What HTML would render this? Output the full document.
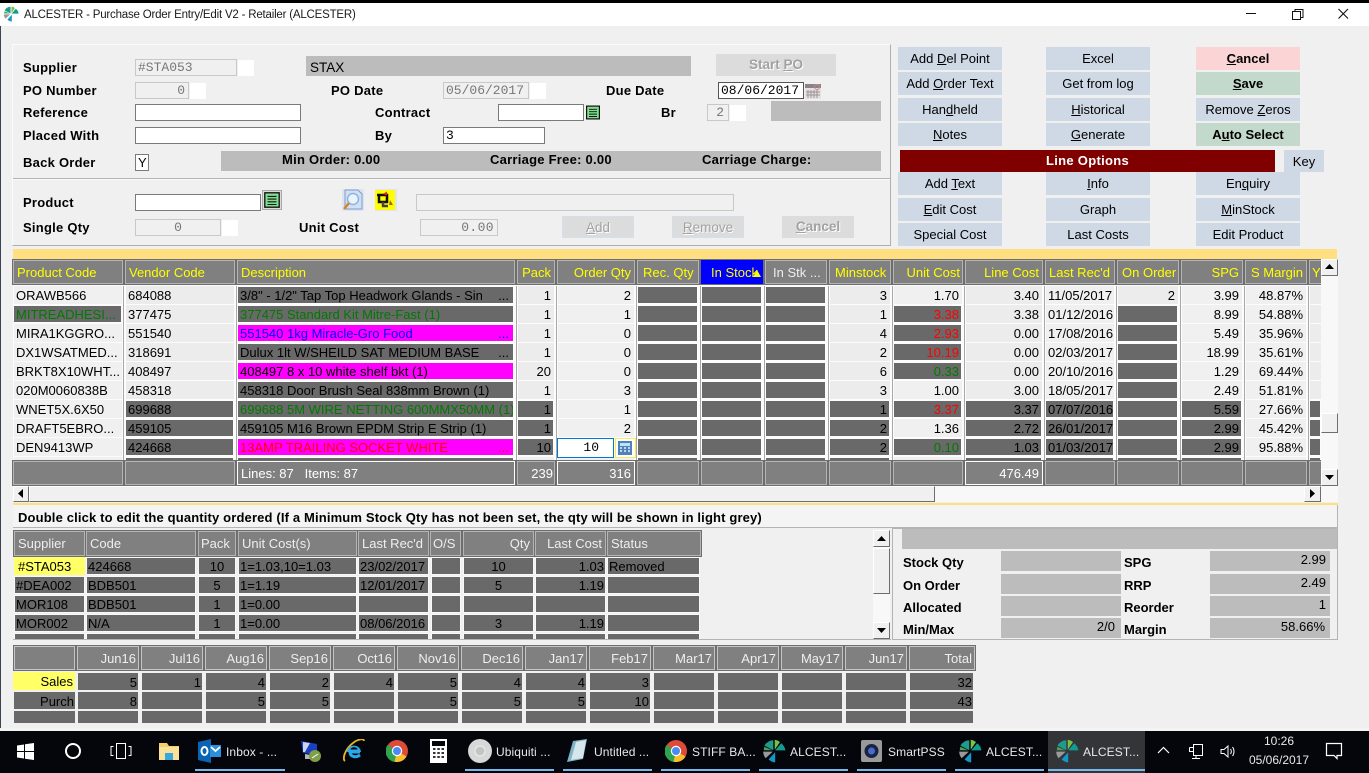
<!DOCTYPE html>
<html><head><meta charset="utf-8"><title>ALCESTER</title>
<style>
html,body{margin:0;padding:0;width:1369px;height:773px;overflow:hidden;background:#f0f0f0}
body{font:13px/18px "Liberation Sans",sans-serif;color:#000;position:relative}
div,span.a,svg.a{position:absolute;box-sizing:border-box;white-space:nowrap}
.l{font-weight:bold;letter-spacing:.25px;height:19px;padding-top:1px}
.w{background:#fff}
.i{background:#fff;border:1px solid #7a7a7a;font:13px/15px "Liberation Mono",monospace;padding-left:2px;height:17px}
.g{background:#f0f0f0;border:1px solid #c8c8c8;font:13px/15px "Liberation Mono",monospace;color:#777;height:17px;padding:0 3px}
.bar{background:#bcbcbc}
.b{background:#cfd9e6;width:104px;height:23px;text-align:center;font-size:13px;line-height:23px}
.bc1{left:898px}.bc2{left:1046px}.bc3{left:1196px}
.dis{background:#dcdcdc;height:22px;text-align:center;font-weight:bold;color:#a2a2a2;text-shadow:1px 1px 0 #fff;line-height:22px;font-size:13.5px}
.h{background:#808080;border:1px solid #b4b4b4;outline:1px solid #6e6e6e;color:#ff0;height:24px;line-height:23px;font-size:13px;padding:0 3px;top:260px;overflow:hidden}
.f{top:461px;color:#fff;border-color:#b4b4b4;background:#808080}
.fw{border-color:#fff}
.r{text-align:right}.ct{text-align:center}
.row{left:0;width:1369px;height:18px}
.row div{top:0;height:18px;background:#ececec;padding:0 3px 0 2px;line-height:20px;overflow:hidden}
.row .n{background:#f0f0f0}
.row .d,.row .m{background:#696969;background-clip:padding-box;border:1px solid transparent;border-left-width:0;padding:0 2px;line-height:18px}
.row .m{background-color:#f0f}
.e{position:absolute;right:4px;top:0}
.gr{color:#007a00}.rd{color:#f00}.bl{color:#00f}
.c1{left:14px;width:108px}.c2{left:126px;width:108px}.c3{left:238px;width:276px}.c4{left:518px;width:36px}.c5{left:558px;width:76px}.c6{left:638px;width:60px}.c7{left:702px;width:60px}.c8{left:766px;width:60px}.c9{left:830px;width:60px}.c10{left:894px;width:68px}.c11{left:966px;width:76px}.c12{left:1046px;width:68px}.c13{left:1118px;width:60px}.c14{left:1182px;width:60px}.c15{left:1246px;width:60px}.c16{left:1310px;width:11px}
.v{top:286px;height:175px;width:1px;background:#a8a8a8}
.sb{background:#f0f0f0;border:1px solid;border-color:#fff #6e6e6e #6e6e6e #fff}
.lh{top:531px;height:25px;background:#808080;border:1px solid #b4b4b4;outline:1px solid #6e6e6e;color:#eee;line-height:23px;padding:0 3px}
.lrow{left:0;width:900px;height:18px}
.lrow div{top:0;height:18px;background:#696969;background-clip:padding-box;border:1px solid #f8f8f8;line-height:18px;padding:0 1px;overflow:hidden}
.l1{left:14px;width:71px}.l2{left:86px;width:110px}.l3{left:198px;width:38px}.l4{left:238px;width:119px}.l5{left:358px;width:71px}.l6{left:431px;width:30px}.l7{left:463px;width:71px}.l8{left:535px;width:71px}.l9{left:607px;width:93px}
.p{background:#bcbcbc;height:20px;width:120px;text-align:right;padding-right:4px;line-height:18px}
.pl{font-weight:bold;height:19px;padding-top:1px}
.mh{display:flex;gap:2px;left:77px}
.mh span{display:block;box-sizing:border-box;width:62px;height:24px;background:#808080;border:1px solid #c4c4c4;outline:1px solid #6e6e6e;color:#eee;text-align:right;padding-right:2px;line-height:24px}
.mr{display:flex;gap:4px;left:78px}
.mr span{display:block;width:60px;height:17px;background:#696969;text-align:right;line-height:19px;padding-right:1px;box-sizing:border-box;overflow:hidden}
.tt{color:#e8e8e8;font-size:12px;top:743px;line-height:18px;letter-spacing:.1px}
.ul{top:769px;height:2px;background:#76b9ed}
</style></head><body>
<svg width="0" height="0" style="position:absolute"><defs>
<symbol id="logo" viewBox="0 0 20 20"><path d="M9.4 9.4V1A9 9 0 0 0 2 5.500Z" fill="#1f9a8c"/><path d="M10.600 9V.6A9 9 0 0 1 15 2.500Z" fill="#7cc04a"/><path d="M11 9.500L16 3.500A9 9 0 0 1 19.500 9.500Z" fill="#0f9d8f"/><path d="M9.500 11V19.500A9 9 0 0 1 4 17Z" fill="#1497c9" transform="translate(1.500 0)"/><path d="M9 10.500H1A9 9 0 0 0 3 16Z" fill="#9a9a9a"/><path d="M1.500 9.400A9 9 0 0 1 2 6.500L8.500 9.400Z" fill="#4aa05a"/></symbol>
<symbol id="chrome" viewBox="0 0 22 22"><circle cx="11" cy="11" r="11" fill="#dd4b39"/><path d="M11 11L20.500 16.500A11 11 0 0 1 8 21.600Z" fill="#f6c02c"/><path d="M11 11L8.500 22A11 11 0 0 1 1.500 5Z" fill="#2ea44f"/><circle cx="11" cy="11" r="5.200" fill="#fff"/><circle cx="11" cy="11" r="4" fill="#4a8af4"/></symbol>
<symbol id="list" viewBox="0 0 20 20"><rect x="2" y="2" width="16" height="16" fill="#7fe08f" stroke="#111" stroke-width="1.500"/><path d="M5 6H15M5 9H15M5 12H15M5 15H15" stroke="#111" stroke-width="1.200"/></symbol>
</defs></svg>

<!-- window chrome -->
<div style="left:0;top:0;width:1369px;height:3px;background:#000"></div>
<div style="left:0;top:3px;width:1369px;height:23px;background:#fff"></div>
<svg class="a" style="left:3px;top:6px" width="16" height="16"><use href="#logo"/></svg>
<div style="left:24px;top:7px;font-size:11.5px;line-height:17px;color:#1a1a1a;letter-spacing:-.2px">ALCESTER - Purchase Order Entry/Edit V2 - Retailer (ALCESTER)</div>
<svg class="a" style="left:1240px;top:5px" width="120" height="18" fill="none" stroke="#111"><path d="M6 8.500H16"/><path d="M52.500 6.500h8v8h-8zM55 6.500V4.500h8v8h-2"/><path d="M98.500 4L108 13.500M108 4L98.500 13.500" stroke-width="1.100"/></svg>
<div style="left:0;top:26px;width:1px;height:705px;background:#3c4454"></div>

<!-- form panel -->
<div style="left:12px;top:44px;width:879px;height:202px;border:1px solid;border-color:#fbfbfb #b0b0b0 #b0b0b0 #fbfbfb"></div>
<div style="left:13px;top:178px;width:877px;height:2px;background:#b4b4b4;border-bottom:1px solid #fafafa"></div>

<div class="l" style="left:23px;top:58px">Supplier</div>
<div class="g" style="left:135px;top:59px;width:102px;padding-left:2px">#STA053</div><div class="w" style="left:238px;top:60px;width:16px;height:16px"></div>
<div class="bar" style="left:306px;top:56px;width:385px;height:20px;padding-left:4px;line-height:23px;font-size:13.5px">STAX</div>
<div class="dis" style="left:716px;top:54px;width:120px">Start <u>P</u>O</div>

<div class="l" style="left:23px;top:81px">PO Number</div>
<div class="g r" style="left:135px;top:82px;width:54px">0</div><div class="w" style="left:190px;top:83px;width:16px;height:16px"></div>
<div class="l" style="left:331px;top:81px">PO Date</div>
<div class="g" style="left:443px;top:82px;width:86px;padding-left:2px">05/06/2017</div><div class="w" style="left:530px;top:83px;width:16px;height:16px"></div>
<div class="l" style="left:606px;top:81px">Due Date</div>
<div class="i" style="left:718px;top:82px;width:86px;border-color:#555">08/06/2017</div>
<svg class="a" style="left:805px;top:83px" width="16" height="16"><rect x="0" y="1" width="16" height="15" fill="#e6e0e0"/><rect x="0" y="1" width="16" height="4" fill="#8a8488"/><path d="M3 7v8M6 7v8M9 7v8M12 7v8M1 9h14M1 12h14" stroke="#9a9498"/><circle cx="12" cy="4" r="2.500" fill="none" stroke="#c88"/></svg>

<div class="l" style="left:23px;top:103px">Reference</div>
<div class="i" style="left:135px;top:104px;width:166px"></div>
<div class="l" style="left:375px;top:103px">Contract</div>
<div class="i" style="left:498px;top:104px;width:86px"></div>
<svg class="a" style="left:585px;top:104px" width="16" height="17"><use href="#list"/></svg>
<div class="l" style="left:661px;top:103px">Br</div>
<div class="g r" style="left:707px;top:104px;width:22px;padding-right:4px">2</div><div class="w" style="left:730px;top:105px;width:16px;height:16px"></div>
<div class="bar" style="left:771px;top:101px;width:110px;height:20px"></div>

<div class="l" style="left:23px;top:126px">Placed With</div>
<div class="i" style="left:135px;top:127px;width:166px"></div>
<div class="l" style="left:375px;top:126px">By</div>
<div class="i" style="left:443px;top:127px;width:102px">3</div>

<div class="l" style="left:23px;top:153px">Back Order</div>
<div class="i" style="left:135px;top:154px;width:14px;padding-left:2px;font:13px/15px 'Liberation Sans',sans-serif">Y</div>
<div class="bar" style="left:221px;top:151px;width:660px;height:20px"></div>
<div class="l" style="left:282px;top:150px">Min Order: 0.00</div>
<div class="l" style="left:490px;top:150px">Carriage Free: 0.00</div>
<div class="l" style="left:702px;top:150px">Carriage Charge:</div>

<div class="l" style="left:23px;top:193px">Product</div>
<div class="i" style="left:135px;top:194px;width:126px"></div>
<div style="left:262px;top:190px;width:20px;height:20px;background:#dcdcdc;border:1px solid #a8a8a8"></div>
<svg class="a" style="left:263px;top:191px" width="18" height="18"><use href="#list"/></svg>
<svg class="a" style="left:342px;top:189px" width="22" height="22"><rect width="22" height="22" fill="#dfe5ee"/><path d="M3 1H16L20 5V20H3Z" fill="#cfe0f7" stroke="#7e9bc8"/><circle cx="11" cy="10" r="5.500" fill="#e8f4fc" stroke="#8fb4d8" stroke-width="1.500"/><path d="M7 14L2 20" stroke="#d9822b" stroke-width="2.500"/></svg>
<svg class="a" style="left:375px;top:189px" width="22" height="22"><rect width="22" height="22" fill="#dfe5ee"/><rect x="0" y="1" width="20" height="20" fill="#ff0"/><path d="M2 6H12V13H4V6" fill="none" stroke="#111" stroke-width="2.500"/><path d="M8 13V17H13" fill="none" stroke="#444" stroke-width="2.500"/><path d="M8 5L12 2.500V6.500Z" fill="#e22"/><path d="M15 11L18 16H14Z" fill="#a60"/></svg>
<div class="g" style="left:416px;top:194px;width:318px"></div>

<div class="l" style="left:23px;top:218px">Single Qty</div>
<div class="g ct" style="left:135px;top:219px;width:86px">0</div><div class="w" style="left:222px;top:220px;width:16px;height:16px"></div>
<div class="l" style="left:299px;top:218px">Unit Cost</div>
<div class="g r" style="left:420px;top:219px;width:78px;letter-spacing:.4px">0.00</div>
<div class="dis" style="left:562px;top:216px;width:72px;font-weight:normal;border:1px solid #d4dfea"><u>A</u>dd</div>
<div class="dis" style="left:672px;top:216px;width:72px;font-weight:normal;border:1px solid #d4dfea"><u>R</u>emove</div>
<div class="dis" style="left:782px;top:216px;width:72px"><u>C</u>ancel</div>

<!-- buttons -->
<div class="b bc1" style="top:47px">Add <u>D</u>el Point</div>
<div class="b bc2" style="top:47px">Excel</div>
<div class="b bc3" style="top:47px;background:#fbd5d5;font-weight:bold"><u>C</u>ancel</div>
<div class="b bc1" style="top:72px">Add <u>O</u>rder Text</div>
<div class="b bc2" style="top:72px">Get from log</div>
<div class="b bc3" style="top:72px;background:#c3d9cb;font-weight:bold"><u>S</u>ave</div>
<div class="b bc1" style="top:98px">Han<u>d</u>held</div>
<div class="b bc2" style="top:98px"><u>H</u>istorical</div>
<div class="b bc3" style="top:98px">Remove <u>Z</u>eros</div>
<div class="b bc1" style="top:123px"><u>N</u>otes</div>
<div class="b bc2" style="top:123px"><u>G</u>enerate</div>
<div class="b bc3" style="top:123px;background:#c3d9cb;font-weight:bold">A<u>u</u>to Select</div>
<div style="left:900px;top:150px;width:375px;height:22px;background:#800000;color:#fff;font-weight:bold;text-align:center;line-height:21px;letter-spacing:.3px">Line Options</div>
<div class="b" style="left:1284px;top:150px;width:40px;height:22px">Key</div>
<div class="b bc1" style="top:172px">Add <u>T</u>ext</div>
<div class="b bc2" style="top:172px"><u>I</u>nfo</div>
<div class="b bc3" style="top:172px">En<u>q</u>uiry</div>
<div class="b bc1" style="top:198px"><u>E</u>dit Cost</div>
<div class="b bc2" style="top:198px">Graph</div>
<div class="b bc3" style="top:198px"><u>M</u>inStock</div>
<div class="b bc1" style="top:223px">Special Cost</div>
<div class="b bc2" style="top:223px">Last Costs</div>
<div class="b bc3" style="top:223px">Edit Product</div>

<!-- main grid -->
<div style="left:13px;top:249px;width:1324px;height:10px;background:#ffdf80"></div>
<div style="left:13px;top:259px;width:1308px;height:227px;background:#fcfcfc"></div>
<div class="v" style="left:123px"></div><div class="v" style="left:236px"></div><div class="v" style="left:516px"></div><div class="v" style="left:556px"></div><div class="v" style="left:636px"></div><div class="v" style="left:700px"></div><div class="v" style="left:764px"></div><div class="v" style="left:828px"></div><div class="v" style="left:892px"></div><div class="v" style="left:964px"></div><div class="v" style="left:1044px"></div><div class="v" style="left:1116px"></div><div class="v" style="left:1180px"></div><div class="v" style="left:1244px"></div><div class="v" style="left:1308px"></div>

<div class="h" style="left:13px;width:110px">Product Code</div>
<div class="h" style="left:125px;width:110px">Vendor Code</div>
<div class="h" style="left:237px;width:278px">Description</div>
<div class="h r" style="left:517px;width:38px;padding-right:3px">Pack</div>
<div class="h r" style="left:557px;width:78px">Order Qty</div>
<div class="h" style="left:637px;width:62px;padding:0 5px">Rec. Qty</div>
<div class="h r" style="left:701px;width:62px;background:#00f;border-color:#00f;padding-right:4px">In Stock</div>
<div class="h" style="left:765px;width:62px;color:#eee;padding-left:7px">In Stk ...</div>
<div class="h" style="left:829px;width:62px;padding:0 5px">Minstock</div>
<div class="h r" style="left:893px;width:70px;padding-right:2px">Unit Cost</div>
<div class="h r" style="left:965px;width:78px">Line Cost</div>
<div class="h" style="left:1045px;width:70px;padding:0 3px">Last Rec'd</div>
<div class="h" style="left:1117px;width:62px;padding:0 4px">On Order</div>
<div class="h r" style="left:1181px;width:62px;padding-right:3px">SPG</div>
<div class="h" style="left:1245px;width:62px;padding:0 5px">S Margin</div>
<div class="h" style="left:1309px;width:13px;padding:0 2px">Y</div>
<svg class="a" style="left:752px;top:269px" width="9" height="9"><path d="M1 8L5 1L9 8Z" fill="#ff0"/></svg>

<div style="left:0;top:286px;width:1321px;height:174px;overflow:hidden">
<div class="row" style="top:0"><div class="c1 n">ORAWB566</div><div class="c2">684088</div><div class="c3 d">3/8" - 1/2" Tap Top Headwork Glands - Sin<span class="e">...</span></div><div class="c4 r">1</div><div class="c5 r n">2</div><div class="c6 d"></div><div class="c7 d"></div><div class="c8 d"></div><div class="c9 r">3</div><div class="c10 r n">1.70</div><div class="c11 r">3.40</div><div class="c12 n">11/05/2017</div><div class="c13 r">2</div><div class="c14 r n">3.99</div><div class="c15 r n">48.87%</div><div class="c16"></div></div>
<div class="row" style="top:19px"><div class="c1 d gr">MITREADHESI...</div><div class="c2">377475</div><div class="c3 d gr">377475 Standard Kit Mitre-Fast (1)</div><div class="c4 r">1</div><div class="c5 r n">1</div><div class="c6 d"></div><div class="c7 d"></div><div class="c8 d"></div><div class="c9 r">1</div><div class="c10 r d rd">3.38</div><div class="c11 r">3.38</div><div class="c12 n">01/12/2016</div><div class="c13 d"></div><div class="c14 r n">8.99</div><div class="c15 r n">54.88%</div><div class="c16"></div></div>
<div class="row" style="top:38px"><div class="c1 n">MIRA1KGGRO...</div><div class="c2">551540</div><div class="c3 m bl">551540 1kg Miracle-Gro Food<span class="e">...</span></div><div class="c4 r">1</div><div class="c5 r n">0</div><div class="c6 d"></div><div class="c7 d"></div><div class="c8 d"></div><div class="c9 r">4</div><div class="c10 r d rd">2.93</div><div class="c11 r">0.00</div><div class="c12 n">17/08/2016</div><div class="c13 d"></div><div class="c14 r n">5.49</div><div class="c15 r n">35.96%</div><div class="c16"></div></div>
<div class="row" style="top:57px"><div class="c1 n">DX1WSATMED...</div><div class="c2">318691</div><div class="c3 d">Dulux 1lt W/SHEILD SAT MEDIUM BASE<span class="e">...</span></div><div class="c4 r">1</div><div class="c5 r n">0</div><div class="c6 d"></div><div class="c7 d"></div><div class="c8 d"></div><div class="c9 r">2</div><div class="c10 r d rd">10.19</div><div class="c11 r">0.00</div><div class="c12 n">02/03/2017</div><div class="c13 d"></div><div class="c14 r n">18.99</div><div class="c15 r n">35.61%</div><div class="c16"></div></div>
<div class="row" style="top:76px"><div class="c1 n">BRKT8X10WHT...</div><div class="c2">408497</div><div class="c3 m">408497 8 x 10 white shelf bkt (1)</div><div class="c4 r">20</div><div class="c5 r n">0</div><div class="c6 d"></div><div class="c7 d"></div><div class="c8 d"></div><div class="c9 r">6</div><div class="c10 r d gr">0.33</div><div class="c11 r">0.00</div><div class="c12 n">20/10/2016</div><div class="c13 d"></div><div class="c14 r n">1.29</div><div class="c15 r n">69.44%</div><div class="c16"></div></div>
<div class="row" style="top:95px"><div class="c1 n">020M0060838B</div><div class="c2">458318</div><div class="c3 d">458318 Door Brush Seal 838mm Brown (1)</div><div class="c4 r">1</div><div class="c5 r n">3</div><div class="c6 d"></div><div class="c7 d"></div><div class="c8 d"></div><div class="c9 r">3</div><div class="c10 r n">1.00</div><div class="c11 r">3.00</div><div class="c12 n">18/05/2017</div><div class="c13 d"></div><div class="c14 r n">2.49</div><div class="c15 r n">51.81%</div><div class="c16"></div></div>
<div class="row" style="top:114px"><div class="c1 n">WNET5X.6X50</div><div class="c2 d">699688</div><div class="c3 d gr">699688 5M WIRE NETTING 600MMX50MM (1)</div><div class="c4 r d">1</div><div class="c5 r n">1</div><div class="c6 d"></div><div class="c7 d"></div><div class="c8 d"></div><div class="c9 r d">1</div><div class="c10 r d rd">3.37</div><div class="c11 r d">3.37</div><div class="c12 d">07/07/2016</div><div class="c13 d"></div><div class="c14 r d">5.59</div><div class="c15 r n">27.66%</div><div class="c16 d"></div></div>
<div class="row" style="top:133px"><div class="c1 n">DRAFT5EBRO...</div><div class="c2 d">459105</div><div class="c3 d">459105 M16 Brown EPDM Strip E Strip (1)</div><div class="c4 r d">1</div><div class="c5 r n">2</div><div class="c6 d"></div><div class="c7 d"></div><div class="c8 d"></div><div class="c9 r d">2</div><div class="c10 r n">1.36</div><div class="c11 r d">2.72</div><div class="c12 d">26/01/2017</div><div class="c13 d"></div><div class="c14 r d">2.99</div><div class="c15 r n">45.42%</div><div class="c16 d"></div></div>
<div class="row" style="top:152px"><div class="c1 n">DEN9413WP</div><div class="c2 d">424668</div><div class="c3 m rd">13AMP TRAILING SOCKET WHITE<span class="e">...</span></div><div class="c4 r d">10</div><div class="c6 d"></div><div class="c7 d"></div><div class="c8 d"></div><div class="c9 r d">2</div><div class="c10 r d gr">0.10</div><div class="c11 r d">1.03</div><div class="c12 d">01/03/2017</div><div class="c13 d"></div><div class="c14 r d">2.99</div><div class="c15 r n">95.88%</div><div class="c16 d"></div></div>
<div class="row" style="top:171px"><div class="c1 n"></div><div class="c2 d"></div><div class="c3 d"></div><div class="c4 n"></div><div class="c5 n"></div><div class="c6 d"></div><div class="c7 d"></div><div class="c8 d"></div><div class="c9 d"></div><div class="c10 n"></div><div class="c11 d"></div><div class="c12 d"></div><div class="c13 d"></div><div class="c14 d"></div><div class="c15 n"></div><div class="c16 d"></div></div>
</div>
<div style="left:557px;top:438px;width:57px;height:20px;background:#fff;border:1px solid #0078d7;font:13px/17px 'Liberation Mono',monospace;text-align:right;padding-right:14px">10</div>
<div style="left:615px;top:438px;width:21px;height:20px;background:#fff;border:1px solid #f4ee50"></div>
<svg class="a" style="left:618px;top:441px" width="14" height="14"><rect width="14" height="14" fill="#4f81bd"/><rect x="2" y="2" width="10" height="3" fill="#bfe3f5"/><path d="M2 7h2M6 7h2M10 7h2M2 10h2M6 10h2M10 10h2" stroke="#e8f0f8" stroke-width="1.500"/></svg>

<div class="h f" style="left:13px;width:110px"></div>
<div class="h f" style="left:125px;width:110px"></div>
<div class="h f fw" style="left:237px;width:278px;padding-left:3px">Lines: 87 &nbsp;&nbsp;Items: 87</div>
<div class="h f r" style="left:517px;width:38px;padding-right:1px">239</div>
<div class="h f fw r" style="left:557px;width:78px">316</div>
<div class="h f" style="left:637px;width:62px"></div>
<div class="h f" style="left:701px;width:62px"></div>
<div class="h f" style="left:765px;width:62px"></div>
<div class="h f" style="left:829px;width:62px"></div>
<div class="h f" style="left:893px;width:70px"></div>
<div class="h f fw r" style="left:965px;width:78px">476.49</div>
<div class="h f" style="left:1045px;width:70px"></div>
<div class="h f" style="left:1117px;width:62px"></div>
<div class="h f" style="left:1181px;width:62px"></div>
<div class="h f" style="left:1245px;width:62px"></div>
<div class="h f" style="left:1309px;width:13px"></div>

<!-- scrollbars -->
<div style="left:1321px;top:259px;width:17px;height:227px;background:#f8f8f8"></div>
<div class="sb" style="left:1321px;top:259px;width:17px;height:17px"></div>
<svg class="a" style="left:1325px;top:264px" width="9" height="6"><path d="M0 5L4.500 0L9 5Z"/></svg>
<div class="sb" style="left:1321px;top:413px;width:17px;height:20px"></div>
<div class="sb" style="left:1321px;top:469px;width:17px;height:17px"></div>
<svg class="a" style="left:1325px;top:475px" width="9" height="6"><path d="M0 0L4.500 5L9 0Z"/></svg>
<div style="left:13px;top:486px;width:1325px;height:16px;background:#f8f8f8"></div>
<div class="sb" style="left:13px;top:486px;width:16px;height:16px"></div>
<svg class="a" style="left:18px;top:489px" width="6" height="9"><path d="M5 0L0 4.500L5 9Z"/></svg>
<div class="sb" style="left:29px;top:486px;width:906px;height:16px"></div>
<div class="sb" style="left:1304px;top:486px;width:17px;height:16px"></div>
<svg class="a" style="left:1310px;top:489px" width="6" height="9"><path d="M0 0L5 4.500L0 9Z"/></svg>
<div style="left:13px;top:503px;width:1325px;height:2px;background:#ffdf80"></div>
<div style="left:13px;top:505px;width:1325px;height:23px;border-bottom:1px solid #b4b4b4;border-right:1px solid #b4b4b4;background:#f4f4f4"></div>
<div style="left:18px;top:509px;font-weight:bold;line-height:18px;letter-spacing:.15px">Double click to edit the quantity ordered (If a Minimum Stock Qty has not been set, the qty will be shown in light grey)</div>

<!-- lower grid -->
<div class="lh" style="left:14px;width:71px">Supplier</div>
<div class="lh" style="left:86px;width:110px">Code</div>
<div class="lh" style="left:198px;width:38px;padding:0 2px">Pack</div>
<div class="lh" style="left:238px;width:119px">Unit Cost(s)</div>
<div class="lh" style="left:358px;width:71px;padding:0 3px">Last Rec'd</div>
<div class="lh" style="left:430px;width:31px;padding:0 2px">O/S</div>
<div class="lh r" style="left:463px;width:71px">Qty</div>
<div class="lh r" style="left:535px;width:71px">Last Cost</div>
<div class="lh" style="left:607px;width:94px">Status</div>

<div style="left:0;top:557px;width:701px;height:82px;overflow:hidden">
<div class="lrow" style="top:0"><div class="l1" style="background:#ffff66;border-color:#ffff66;padding-left:3px">#STA053</div><div class="l2">424668</div><div class="l3 ct">10</div><div class="l4">1=1.03,10=1.03</div><div class="l5">23/02/2017</div><div class="l6"></div><div class="l7 ct">10</div><div class="l8 r">1.03</div><div class="l9">Removed</div></div>
<div class="lrow" style="top:19px"><div class="l1">#DEA002</div><div class="l2">BDB501</div><div class="l3 ct">5</div><div class="l4">1=1.19</div><div class="l5">12/01/2017</div><div class="l6"></div><div class="l7 ct">5</div><div class="l8 r">1.19</div><div class="l9"></div></div>
<div class="lrow" style="top:38px"><div class="l1">MOR108</div><div class="l2">BDB501</div><div class="l3 ct">1</div><div class="l4">1=0.00</div><div class="l5"></div><div class="l6"></div><div class="l7"></div><div class="l8"></div><div class="l9"></div></div>
<div class="lrow" style="top:57px"><div class="l1">MOR002</div><div class="l2">N/A</div><div class="l3 ct">1</div><div class="l4">1=0.00</div><div class="l5">08/06/2016</div><div class="l6"></div><div class="l7 ct">3</div><div class="l8 r">1.19</div><div class="l9"></div></div>
<div class="lrow" style="top:76px"><div class="l1"></div><div class="l2"></div><div class="l3"></div><div class="l4"></div><div class="l5"></div><div class="l6"></div><div class="l7"></div><div class="l8"></div><div class="l9"></div></div>
</div>
<div style="left:13px;top:639px;width:878px;height:1px;background:#b4b4b4"></div>

<!-- lower scrollbar -->
<div style="left:873px;top:530px;width:17px;height:109px;background:#f8f8f8"></div>
<div class="sb" style="left:873px;top:530px;width:17px;height:17px"></div>
<svg class="a" style="left:877px;top:536px" width="9" height="6"><path d="M0 5L4.500 0L9 5Z"/></svg>
<div class="sb" style="left:873px;top:548px;width:17px;height:46px"></div>
<div class="sb" style="left:873px;top:622px;width:17px;height:17px"></div>
<svg class="a" style="left:877px;top:628px" width="9" height="6"><path d="M0 0L4.500 5L9 0Z"/></svg>

<!-- right info panel -->
<div style="left:892px;top:528px;width:446px;height:112px;border:1px solid #b4b4b4"></div>
<div class="bar" style="left:902px;top:529px;width:435px;height:20px"></div>
<div class="pl" style="left:903px;top:553px">Stock Qty</div><div class="p" style="left:1001px;top:551px"></div><div class="pl" style="left:1124px;top:553px">SPG</div><div class="p" style="left:1210px;top:551px">2.99</div>
<div class="pl" style="left:903px;top:576px">On Order</div><div class="p" style="left:1001px;top:574px"></div><div class="pl" style="left:1124px;top:576px">RRP</div><div class="p" style="left:1210px;top:574px">2.49</div>
<div class="pl" style="left:903px;top:598px">Allocated</div><div class="p" style="left:1001px;top:596px"></div><div class="pl" style="left:1124px;top:598px">Reorder</div><div class="p" style="left:1210px;top:596px">1</div>
<div class="pl" style="left:903px;top:620px">Min/Max</div><div class="p" style="left:1001px;top:618px;padding-right:6px">2/0</div><div class="pl" style="left:1124px;top:620px">Margin</div><div class="p" style="left:1210px;top:618px;padding-right:5px">58.66%</div>

<!-- month grid -->
<div class="mh" style="left:14px;top:646px;gap:0"><span style="width:61px;text-align:left"></span></div>
<div class="mh" style="top:646px"><span>Jun16</span><span>Jul16</span><span>Aug16</span><span>Sep16</span><span>Oct16</span><span>Nov16</span><span>Dec16</span><span>Jan17</span><span>Feb17</span><span>Mar17</span><span>Apr17</span><span>May17</span><span>Jun17</span><span style="width:66px">Total</span></div>
<div style="left:13px;top:672px;width:62px;height:18px;background:#ffff66;text-align:right;padding-right:2px;line-height:20px">Sales</div>
<div style="left:14px;top:692px;width:61px;height:17px;background:#696969;text-align:right;padding-right:1px;line-height:19px">Purch</div>
<div style="left:14px;top:711px;width:61px;height:12px;background:#696969"></div>
<div class="mr" style="top:673px"><span>5</span><span>1</span><span>4</span><span>2</span><span>4</span><span>5</span><span>4</span><span>4</span><span>3</span><span></span><span></span><span></span><span></span><span style="width:63px">32</span></div>
<div class="mr" style="top:692px"><span>8</span><span></span><span>5</span><span>5</span><span></span><span>5</span><span>5</span><span>5</span><span>10</span><span></span><span></span><span></span><span></span><span style="width:63px">43</span></div>
<div class="mr" style="top:711px;height:12px;overflow:hidden"><span></span><span></span><span></span><span></span><span></span><span></span><span></span><span></span><span></span><span></span><span></span><span></span><span></span><span style="width:63px"></span></div>

<!-- taskbar -->
<div style="left:0;top:728px;width:1369px;height:3px;background:#f4f4f4"></div>
<div style="left:0;top:731px;width:1369px;height:42px;background:#05060b"></div>
<div style="left:1048px;top:731px;width:97px;height:42px;background:#333538"></div>
<svg class="a" style="left:17px;top:743px" width="17" height="17" fill="#fff"><path d="M0 2.500L7 1.500V8H0ZM8 1.300L17 0V8H8ZM0 9H7V15.500L0 14.500ZM8 9H17V17L8 15.700Z"/></svg>
<svg class="a" style="left:64px;top:742px" width="18" height="18"><circle cx="9" cy="9" r="7" fill="none" stroke="#fff" stroke-width="2"/></svg>
<svg class="a" style="left:110px;top:742px" width="22" height="18" fill="none" stroke="#fff"><path d="M6.500 1.500h9v15h-9zM3.500 4.500H1v9h2.500M18.500 4.500H21v9h-2.500"/></svg>
<svg class="a" style="left:158px;top:741px" width="22" height="20"><path d="M1 2H9L11 5H21V19H1Z" fill="#f5cf6b"/><rect x="1" y="6" width="20" height="13" fill="#fbe29b"/><rect x="7" y="12" width="8" height="7" fill="#3aa6dd"/></svg>
<svg class="a" style="left:198px;top:739px" width="23" height="24"><path d="M0 3L13 0V24L0 21Z" fill="#0a64b4"/><rect x="12" y="6" width="11" height="12" fill="#2a8fdc"/><path d="M13 8L17.500 12L22 8" fill="none" stroke="#fff" stroke-width="1.800"/><ellipse cx="6.500" cy="12" rx="3" ry="4" fill="none" stroke="#fff" stroke-width="2"/></svg>
<div class="tt" style="left:226px">Inbox - ...</div><div class="ul" style="left:195px;width:90px"></div>
<svg class="a" style="left:300px;top:739px" width="22" height="24"><path d="M1 2L17 5V16L3 14Z" fill="#1a3fc0"/><path d="M3 3L10 4L5 13L3 13Z" fill="#c8d4f2"/><path d="M5 15L16 17V20L5 20Z" fill="#b8b8b8"/><circle cx="15" cy="17" r="6" fill="#7f9f4a"/><path d="M12 19L18 15" stroke="#fff"/></svg>
<svg class="a" style="left:343px;top:739px" width="22" height="24"><path d="M2 22C-1 20 2 10 10 4C15 0 21 -1 21 2" fill="none" stroke="#e6b422" stroke-width="1.800"/><path d="M17 13H7C7 18 13 19 17 16" fill="none" stroke="#2aa8e8" stroke-width="3"/><path d="M4 13C4 5 17 4 18 13Z" fill="#2aa8e8"/><path d="M7.500 10.500C8 7.500 14 7.500 14.500 10.500Z" fill="#05060b"/></svg>
<svg class="a" style="left:386px;top:740px" width="22" height="22"><use href="#chrome"/></svg>
<svg class="a" style="left:430px;top:739px" width="17" height="24"><rect width="17" height="24" fill="#fff"/><rect x="2" y="2" width="13" height="5" fill="#05060b"/><path d="M3 10h2.500M7.300 10h2.500M11.500 10h2.500M3 14h2.500M7.300 14h2.500M11.500 14h2.500M3 18h2.500M7.300 18h2.500M11.500 18h2.500" stroke="#333" stroke-width="2"/></svg>
<svg class="a" style="left:468px;top:739px" width="24" height="24"><circle cx="12" cy="12" r="12" fill="#d8d8d8"/><circle cx="12" cy="12" r="5" fill="#c4c4c4" stroke="#eee"/></svg>
<div class="tt" style="left:496px">Ubiquiti ...</div><div class="ul" style="left:465px;width:89px"></div>
<svg class="a" style="left:566px;top:739px" width="22" height="24"><path d="M7 2L21 0L17 20L1 23Z" fill="#7fb4c8"/><path d="M10 3L20 1L17 19L5 21Z" fill="#d6e6ea"/></svg>
<div class="tt" style="left:594px">Untitled ...</div><div class="ul" style="left:563px;width:89px"></div>
<svg class="a" style="left:665px;top:740px" width="22" height="22"><use href="#chrome"/></svg>
<div class="tt" style="left:692px">STIFF BA...</div><div class="ul" style="left:661px;width:89px"></div>
<svg class="a" style="left:762px;top:739px" width="24" height="24"><use href="#logo"/></svg>
<div class="tt" style="left:790px">ALCEST...</div><div class="ul" style="left:759px;width:89px"></div>
<svg class="a" style="left:861px;top:740px" width="21" height="22"><rect width="21" height="22" rx="2" fill="#9a9a9a"/><circle cx="10.500" cy="11" r="7" fill="#1a2440"/><circle cx="10.500" cy="11" r="3.500" fill="#4a6ad0"/></svg>
<div class="tt" style="left:888px">SmartPSS</div><div class="ul" style="left:857px;width:89px"></div>
<svg class="a" style="left:958px;top:739px" width="24" height="24"><use href="#logo"/></svg>
<div class="tt" style="left:986px">ALCEST...</div><div class="ul" style="left:955px;width:89px"></div>
<svg class="a" style="left:1055px;top:739px" width="24" height="24"><use href="#logo"/></svg>
<div class="tt" style="left:1083px">ALCEST...</div><div class="ul" style="left:1048px;width:97px"></div>
<svg class="a" style="left:1157px;top:746px" width="13" height="8" fill="none" stroke="#fff" stroke-width="1.200"><path d="M1 7L6.500 1.500L12 7"/></svg>
<svg class="a" style="left:1188px;top:743px" width="16" height="17" fill="none" stroke="#fff"><path d="M5.500 1.500h9v11h-9zM1.500 4.500h4M1.500 4.500v4h4M8 12.500v3M4 15.500h8"/></svg>
<svg class="a" style="left:1220px;top:744px" width="16" height="15" fill="none" stroke="#fff"><path d="M1 5.500h3L8 2v11L4 9.500H1zM10.500 5c1 1.500 1 3.500 0 5M12.500 3c2 2.500 2 6.500 0 9"/></svg>
<div style="left:1249px;width:60px;top:733px;color:#e8e8e8;font-size:12px;line-height:16px;text-align:center">10:26</div>
<div style="left:1244px;width:70px;top:752px;color:#e8e8e8;font-size:12px;line-height:16px;text-align:center">05/06/2017</div>
<svg class="a" style="left:1325px;top:742px" width="18" height="18" fill="none" stroke="#fff" stroke-width="1.200"><path d="M1.500 1.500h15v12h-4.500v3l-3-3h-7.500z"/></svg>
</body></html>
